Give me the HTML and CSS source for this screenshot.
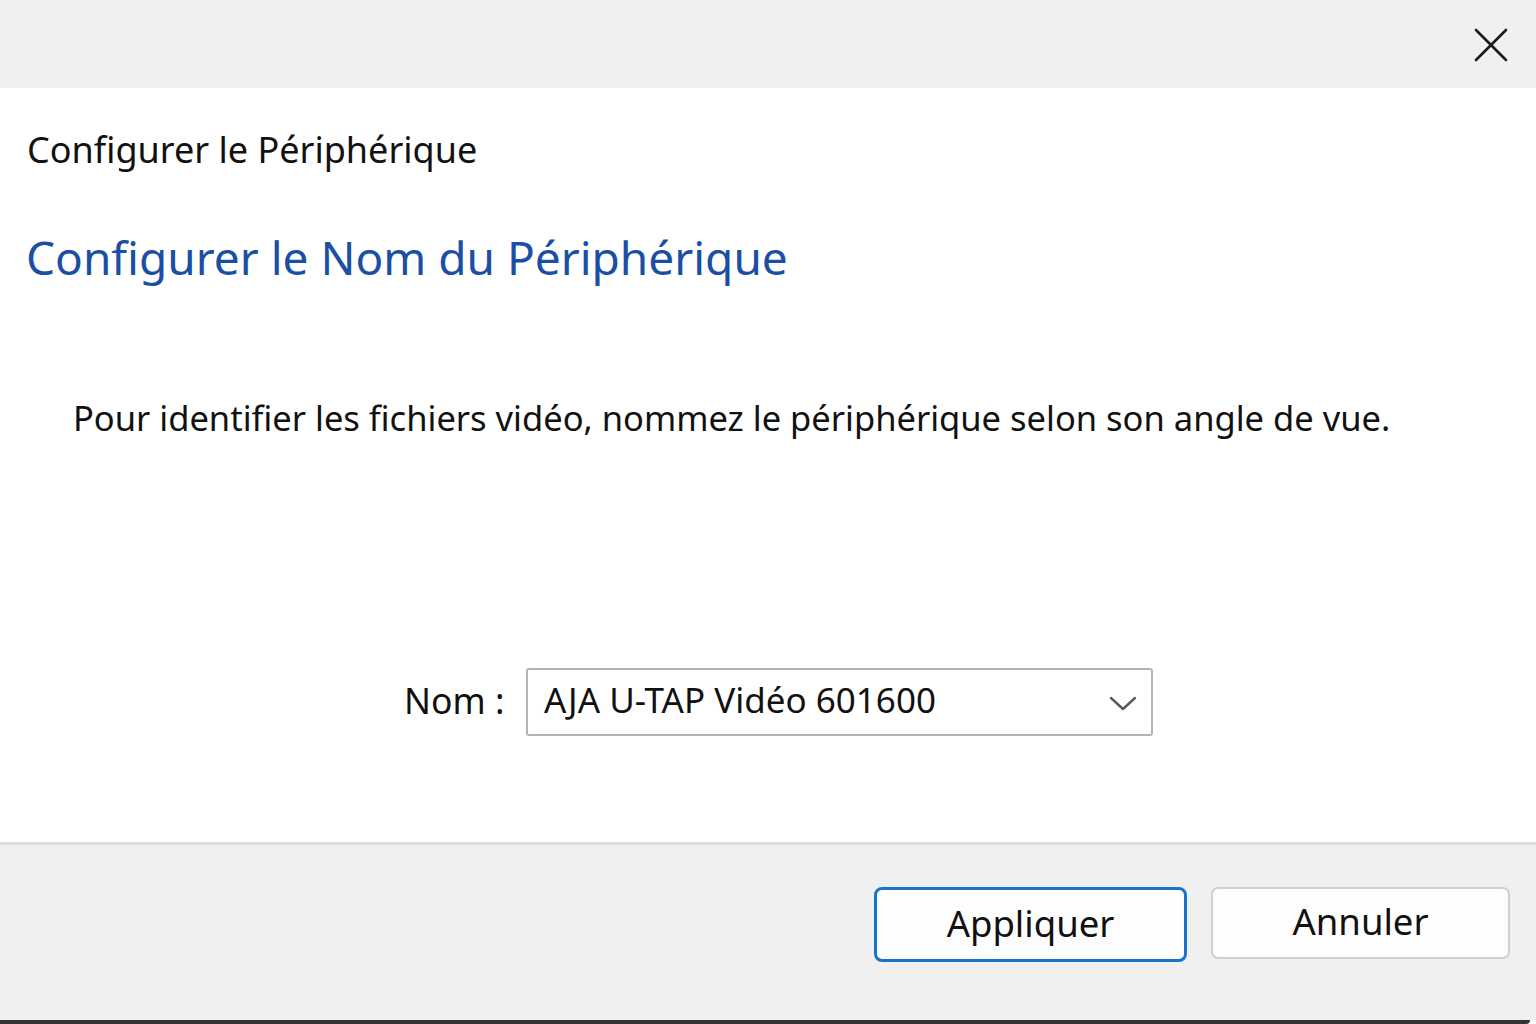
FILE: index.html
```html
<!DOCTYPE html>
<html lang="fr">
<head>
<meta charset="utf-8">
<title>Configurer le Périphérique</title>
<link rel="stylesheet" href="styles.css">
</head>
<body>
<div class="window">
  <div class="titlebar">
    <button class="close" aria-label="Fermer">
      <svg width="34" height="34" viewBox="0 0 34 34"><path d="M2 2 L32 32 M32 2 L2 32" stroke="#1a1a1a" stroke-width="2.6" stroke-linecap="round" fill="none"/></svg>
    </button>
  </div>
  <div class="content">
    <div class="caption">Configurer le Périphérique</div>
    <h1 class="instruction">Configurer le Nom du Périphérique</h1>
    <p class="description">Pour identifier les fichiers vidéo, nommez le périphérique selon son angle de vue.</p>
    <div class="form-row">
      <label class="label">Nom :</label>
      <div class="combo">
        <span class="combo-value">AJA U-TAP Vidéo 601600</span>
        <svg class="chevron" width="28" height="16" viewBox="0 0 28 16"><path d="M2 3 L14 14 L26 3" stroke="#5a5a5a" stroke-width="2.4" fill="none" stroke-linecap="round" stroke-linejoin="round"/></svg>
      </div>
    </div>
  </div>
  <div class="footer">
    <button class="btn primary">Appliquer</button>
    <button class="btn">Annuler</button>
  </div>
  <div class="bottom-edge"></div>
</div>
</body>
</html>
```
FILE: styles.css
```css
* { box-sizing: border-box; }
html, body { margin: 0; padding: 0; }
body {
  width: 1536px;
  height: 1024px;
  overflow: hidden;
  background: #ffffff;
  font-family: "Noto Sans", "Open Sans", sans-serif;
  color: #111;
}
.window {
  display: flex;
  flex-direction: column;
  height: 1024px;
}
.titlebar {
  height: 88px;
  background: #eff0f2;
  display: flex;
  justify-content: flex-end;
  align-items: center;
  padding-right: 28px;
}
.close {
  border: 0;
  background: transparent;
  padding: 0;
  width: 34px;
  height: 34px;
  display: flex;
  margin-top: 2px;
}
.content {
  flex: 1;
  background: #fff;
  padding: 0 0 0 27px;
}
.caption {
  margin-top: 37px;
  font-size: 36px;
  line-height: 50px;
  color: #111;
}
.instruction {
  margin: 52px 0 0 -1px;
  font-weight: 400;
  font-size: 46px;
  line-height: 60px;
  color: #1b4fa3;
}
.description {
  margin: 106px 0 0 46px;
  font-size: 34.5px;
  line-height: 50px;
  color: #111;
}
.form-row {
  margin-top: 225px;
  display: flex;
  align-items: center;
  padding-left: 377px;
}
.label {
  font-size: 35.5px;
  width: 122px;
  margin-top: -4px;
}
.combo {
  width: 627px;
  height: 68px;
  border: 2px solid #b4b4b4;
  border-radius: 3px;
  display: flex;
  align-items: center;
  justify-content: space-between;
  padding: 0 14px 0 16px;
  background: #fff;
}
.combo-value {
  font-size: 35px;
  color: #111;
  margin-top: -6px;
}
.chevron { margin-top: 2px; }
.footer {
  height: 178px;
  background: #f0f0f0;
  border-top: 3px solid #dcdcdc;
  display: flex;
  justify-content: flex-end;
  align-items: flex-start;
  padding: 42px 26px 0 0;
  gap: 24px;
}
.btn {
  font-family: "Noto Sans", "Open Sans", sans-serif;
  font-size: 36.5px;
  color: #111;
  background: #fdfdfd;
  border: 2px solid #cfcfcf;
  border-radius: 7px;
  width: 299px;
  height: 72px;
  padding: 0 0 4px 0;
}
.btn.primary {
  width: 313px;
  height: 75px;
  border: 3px solid #1874cb;
  border-radius: 8px;
}
.bottom-edge {
  height: 4px;
  background: #333;
  margin-right: 6px;
  border-bottom-right-radius: 6px;
}
```
